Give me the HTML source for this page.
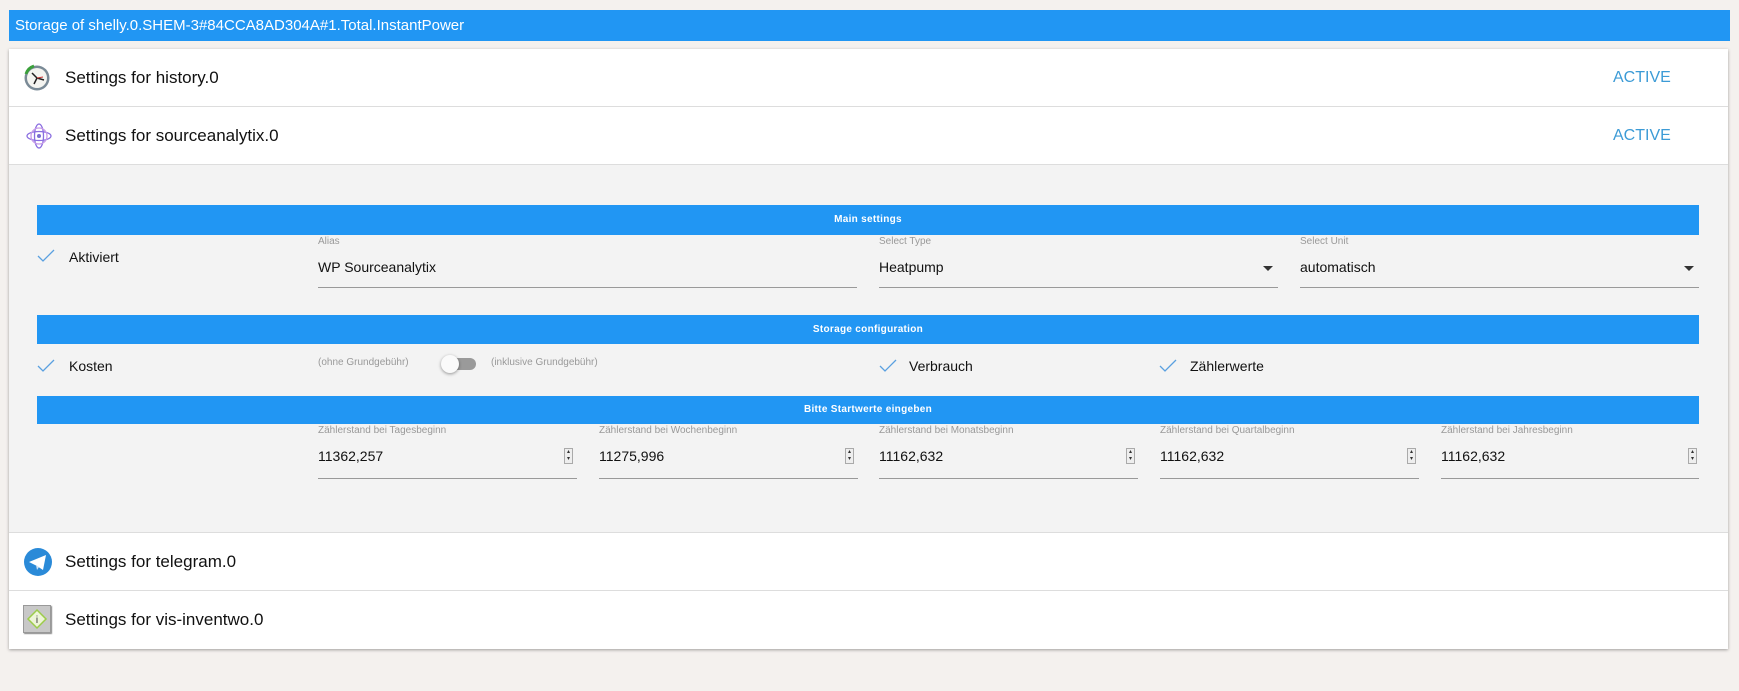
<!DOCTYPE html>
<html><head><meta charset="utf-8"><style>
*{box-sizing:border-box;margin:0;padding:0}
body{width:1739px;height:691px;background:#f4f1ee;font-family:"Liberation Sans",sans-serif;position:relative;overflow:hidden;color:#222}
.abs{position:absolute}
.hdr{left:9px;top:10px;width:1721px;height:31px;background:#2196f3;color:#fff;font-size:15px;line-height:31px;padding-left:6px}
.card{left:9px;top:49px;width:1719px;height:600px;background:#fff;box-shadow:0 1px 3px rgba(0,0,0,.35)}
.row{left:9px;width:1719px;height:58px;border-bottom:1px solid #ddd;background:#fff}
.row .t{position:absolute;left:56px;top:0;line-height:58px;font-size:17px;color:#111}
.row .a{position:absolute;left:1604px;line-height:58px;font-size:16px;color:#3c9bd6}
.exp{left:9px;top:165px;width:1719px;height:368px;background:#f3f3f3;border-bottom:1px solid #ddd}
.bar{left:37px;width:1662px;background:#2196f3;color:#fff;font-size:10px;font-weight:bold;text-align:center;letter-spacing:.3px}
.lbl{font-size:10px;color:#999}
.val{font-size:14px;color:#111}
.ul{height:1px;background:#999}
.chk{width:18px;height:14px}
.txt{font-size:14px;color:#111}
.spin{width:9px;height:16px;border:1px solid #aaa;background:#eee;font-size:6px;line-height:7px;text-align:center;color:#333}
.arr{width:0;height:0;border-left:5px solid transparent;border-right:5px solid transparent;border-top:5px solid #333}
</style></head><body>
<div class="abs hdr">Storage of shelly.0.SHEM-3#84CCA8AD304A#1.Total.InstantPower</div>
<div class="abs card"></div>
<div class="abs row" style="top:49px"><div class="t">Settings for history.0</div><div class="a">ACTIVE</div>
<svg class="abs" style="left:14px;top:15px" width="28" height="28" viewBox="0 0 28 28"><circle cx="14" cy="14" r="12.5" fill="#7a8a96"/><circle cx="14" cy="14" r="10" fill="#f4f4f0"/><path d="M3 10 A12 12 0 0 1 11 2" stroke="#3aa03a" stroke-width="3" fill="none"/><path d="M14 14 L9 9 M14 14 L21 16 M14 14 L11 20" stroke="#222" stroke-width="1.5"/><path d="M14 14 L20 13" stroke="#c33" stroke-width="1"/></svg></div>
<div class="abs row" style="top:107px"><div class="t">Settings for sourceanalytix.0</div><div class="a">ACTIVE</div>
<svg class="abs" style="left:17px;top:15px" width="26" height="28" viewBox="0 0 26 28"><g fill="none" stroke="#8a6ee0" stroke-width="1.3"><ellipse cx="13" cy="14" rx="12" ry="4.5"/><ellipse cx="13" cy="14" rx="4.5" ry="12"/><ellipse cx="13" cy="14" rx="8" ry="8" stroke="#c79be8"/></g><circle cx="13" cy="14" r="2" fill="#7a6ed0"/></svg></div>
<div class="abs exp"></div>
<div class="abs bar" style="top:205px;height:30px;line-height:30px">Main settings</div>
<svg class="abs chk" style="left:37px;top:249px" viewBox="0 0 18 14"><path d="M1 7 L6 12 L17 1" stroke="#5aa0e0" stroke-width="1.3" fill="none"/></svg>
<div class="abs txt" style="left:69px;top:249px">Aktiviert</div>
<div class="abs lbl" style="left:318px;top:236px">Alias</div>
<div class="abs val" style="left:318px;top:259px">WP Sourceanalytix</div>
<div class="abs ul" style="left:318px;top:287px;width:539px"></div>
<div class="abs lbl" style="left:879px;top:236px">Select Type</div>
<div class="abs val" style="left:879px;top:259px">Heatpump</div>
<div class="abs arr" style="left:1263px;top:266px"></div>
<div class="abs ul" style="left:879px;top:287px;width:399px"></div>
<div class="abs lbl" style="left:1300px;top:236px">Select Unit</div>
<div class="abs val" style="left:1300px;top:259px">automatisch</div>
<div class="abs arr" style="left:1684px;top:266px"></div>
<div class="abs ul" style="left:1300px;top:287px;width:399px"></div>
<div class="abs bar" style="top:315px;height:29px;line-height:29px">Storage configuration</div>
<svg class="abs chk" style="left:37px;top:359px" viewBox="0 0 18 14"><path d="M1 7 L6 12 L17 1" stroke="#5aa0e0" stroke-width="1.3" fill="none"/></svg>
<div class="abs txt" style="left:69px;top:358px">Kosten</div>
<div class="abs lbl" style="left:318px;top:357px">(ohne Grundgebühr)</div>
<div class="abs" style="left:446px;top:358px;width:30px;height:12px;border-radius:6px;background:#9a9a9a"></div>
<div class="abs" style="left:441px;top:355px;width:18px;height:18px;border-radius:9px;background:#fafafa;box-shadow:0 1px 3px rgba(0,0,0,.4)"></div>
<div class="abs lbl" style="left:491px;top:357px">(inklusive Grundgebühr)</div>
<svg class="abs chk" style="left:879px;top:359px" viewBox="0 0 18 14"><path d="M1 7 L6 12 L17 1" stroke="#5aa0e0" stroke-width="1.3" fill="none"/></svg>
<div class="abs txt" style="left:909px;top:358px">Verbrauch</div>
<svg class="abs chk" style="left:1159px;top:359px" viewBox="0 0 18 14"><path d="M1 7 L6 12 L17 1" stroke="#5aa0e0" stroke-width="1.3" fill="none"/></svg>
<div class="abs txt" style="left:1190px;top:358px">Zählerwerte</div>
<div class="abs bar" style="top:396px;height:28px;line-height:28px">Bitte Startwerte eingeben</div>

<div class="abs lbl" style="left:318px;top:425px">Zählerstand bei Tagesbeginn</div>
<div class="abs val" style="left:318px;top:448px">11362,257</div>
<div class="abs spin" style="left:564px;top:448px">▴<br>▾</div>
<div class="abs ul" style="left:318px;top:478px;width:259px"></div>

<div class="abs lbl" style="left:599px;top:425px">Zählerstand bei Wochenbeginn</div>
<div class="abs val" style="left:599px;top:448px">11275,996</div>
<div class="abs spin" style="left:845px;top:448px">▴<br>▾</div>
<div class="abs ul" style="left:599px;top:478px;width:259px"></div>

<div class="abs lbl" style="left:879px;top:425px">Zählerstand bei Monatsbeginn</div>
<div class="abs val" style="left:879px;top:448px">11162,632</div>
<div class="abs spin" style="left:1126px;top:448px">▴<br>▾</div>
<div class="abs ul" style="left:879px;top:478px;width:259px"></div>

<div class="abs lbl" style="left:1160px;top:425px">Zählerstand bei Quartalbeginn</div>
<div class="abs val" style="left:1160px;top:448px">11162,632</div>
<div class="abs spin" style="left:1407px;top:448px">▴<br>▾</div>
<div class="abs ul" style="left:1160px;top:478px;width:259px"></div>

<div class="abs lbl" style="left:1441px;top:425px">Zählerstand bei Jahresbeginn</div>
<div class="abs val" style="left:1441px;top:448px">11162,632</div>
<div class="abs spin" style="left:1688px;top:448px">▴<br>▾</div>
<div class="abs ul" style="left:1441px;top:478px;width:258px"></div>

<div class="abs row" style="top:533px"><div class="t">Settings for telegram.0</div>
<svg class="abs" style="left:14px;top:14px" width="30" height="30" viewBox="0 0 30 30"><circle cx="15" cy="15" r="14" fill="#2a8ad8"/><path d="M6 15 L23 8 L20 23 L14 19 Z" fill="#fff"/><path d="M13 18 L14 23 L16 20" fill="#cfe3f5"/></svg></div>
<div class="abs row" style="top:591px;border-bottom:none"><div class="t">Settings for vis-inventwo.0</div>
<div class="abs" style="left:14px;top:14px;width:28px;height:28px;background:#c8c8c8;border:1px solid #999;box-shadow:1px 1px 1px #888"></div>
<svg class="abs" style="left:16px;top:16px" width="24" height="24" viewBox="0 0 24 24"><path d="M12 3 L21 12 L12 21 L3 12 Z" fill="#eef5d8" stroke="#9ccc4a" stroke-width="1.5"/><text x="12" y="16" font-size="10" text-anchor="middle" font-family="Liberation Sans" fill="#333">i</text></svg></div>
</body></html>
